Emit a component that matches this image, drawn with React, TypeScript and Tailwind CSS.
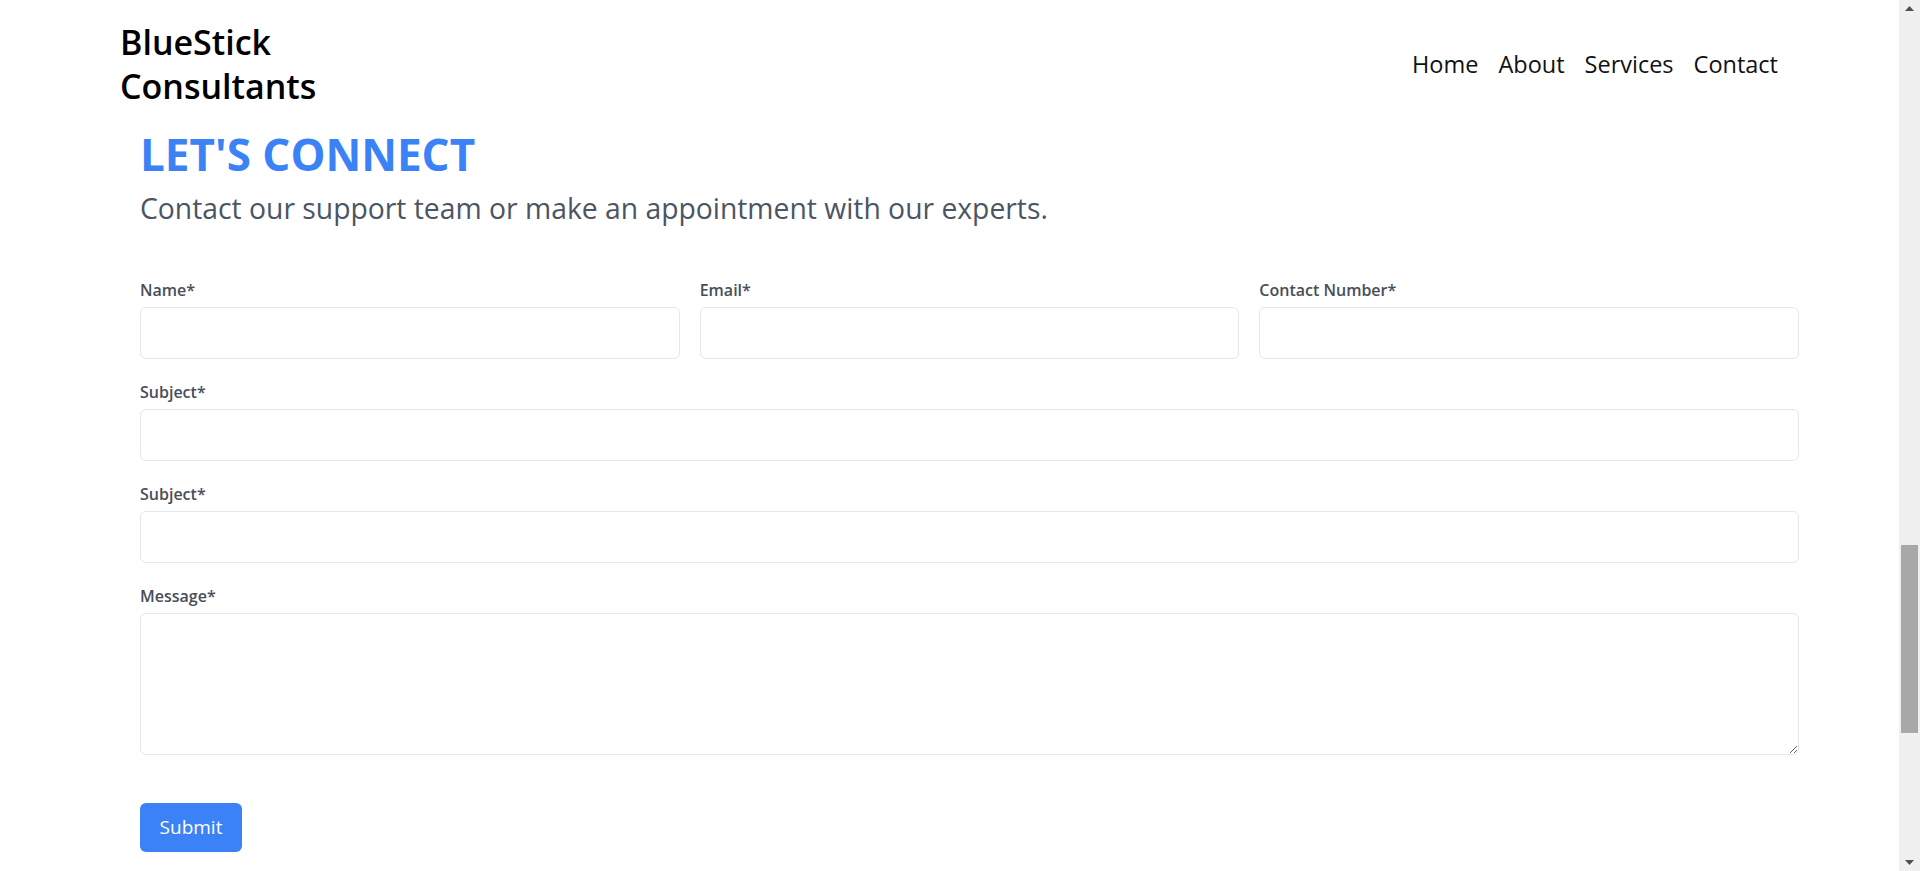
import { useState } from 'react'

const navLinks = ['Home', 'About', 'Services', 'Contact']

function Field({
  label,
  multiline = false,
}: {
  label: string
  multiline?: boolean
}) {
  const [value, setValue] = useState('')
  return (
    <div className="flex flex-col">
      <label className="mb-[7px] block text-[16px] leading-5 font-semibold text-[#474e59]">
        {label}
      </label>
      {multiline ? (
        <textarea
          value={value}
          onChange={(e) => setValue(e.target.value)}
          className="h-[142px] w-full rounded-md border border-[#e5e7eb] bg-white p-3 text-base outline-none"
        />
      ) : (
        <input
          type="text"
          value={value}
          onChange={(e) => setValue(e.target.value)}
          className="h-[52px] w-full rounded-md border border-[#e5e7eb] bg-white px-3 text-base outline-none"
        />
      )}
    </div>
  )
}

function FakeScrollbar() {
  return (
    <div className="flex h-full w-[21px] shrink-0 flex-col items-center bg-[#f0f0f0]">
      {/* up arrow */}
      <div className="flex h-[17px] items-center justify-center">
        <svg width="9" height="5" viewBox="0 0 9 5">
          <path d="M4.5 0 L9 5 L0 5 Z" fill="#505050" />
        </svg>
      </div>
      <div className="h-[528px]" />
      {/* thumb */}
      <div className="h-[188px] w-[17px] bg-[#a8a8a8]" />
      <div className="flex-1" />
      <div className="flex h-[17px] items-center justify-center">
        <svg width="9" height="5" viewBox="0 0 9 5">
          <path d="M0 0 L9 0 L4.5 5 Z" fill="#505050" />
        </svg>
      </div>
    </div>
  )
}

export default function App() {
  return (
    <div className="flex h-screen w-full overflow-hidden bg-white font-['Open_Sans',sans-serif]">
      <div className="flex-1 overflow-hidden">
        {/* header */}
        <header className="flex items-center justify-between pt-[20px] pr-[121px] pl-[120px]">
          <div className="text-[34px] leading-[44px] font-semibold text-black">
            <div>BlueStick</div>
            <div>Consultants</div>
          </div>
          <nav className="flex items-center gap-[20px] text-[23.5px] text-[#111]">
            {navLinks.map((link) => (
              <a key={link} href="#" className="leading-8">
                {link}
              </a>
            ))}
          </nav>
        </header>

        {/* contact section */}
        <section className="mt-[20px] mr-[100px] ml-[140px]">
          <h1 className="text-[44px] leading-[53px] font-bold text-[#3b82f6]">
            LET'S CONNECT
          </h1>
          <p className="mt-[9px] text-[28.3px] leading-9 text-[#4b5563]">
            Contact our support team or make an appointment with our experts.
          </p>

          <form className="mt-[54px] flex flex-col gap-[23px]">
            <div className="grid grid-cols-3 gap-[20px]">
              <Field label="Name*" />
              <Field label="Email*" />
              <Field label="Contact Number*" />
            </div>
            <Field label="Subject*" />
            <Field label="Subject*" />
            <Field label="Message*" multiline />
            <div className="mt-[25px]">
              <button
                type="button"
                className="h-[49px] w-[102px] rounded-md bg-[#3b82f6] text-[19px] text-white"
              >
                Submit
              </button>
            </div>
          </form>
        </section>
      </div>
      <FakeScrollbar />
    </div>
  )
}
